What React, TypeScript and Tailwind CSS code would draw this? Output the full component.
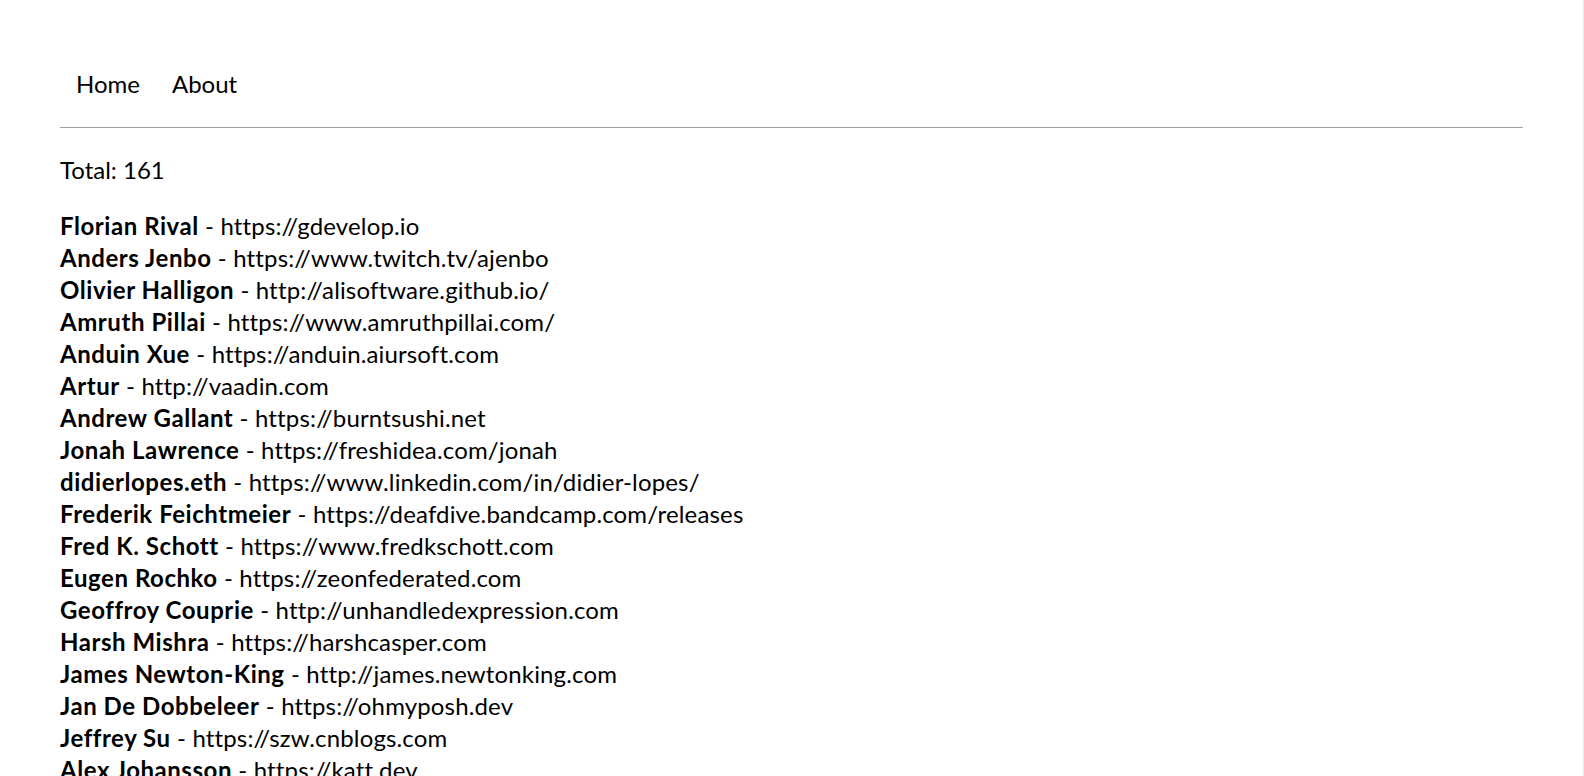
const supporters = [
  { name: 'Florian Rival', url: 'https://gdevelop.io' },
  { name: 'Anders Jenbo', url: 'https://www.twitch.tv/ajenbo' },
  { name: 'Olivier Halligon', url: 'http://alisoftware.github.io/' },
  { name: 'Amruth Pillai', url: 'https://www.amruthpillai.com/' },
  { name: 'Anduin Xue', url: 'https://anduin.aiursoft.com' },
  { name: 'Artur', url: 'http://vaadin.com' },
  { name: 'Andrew Gallant', url: 'https://burntsushi.net' },
  { name: 'Jonah Lawrence', url: 'https://freshidea.com/jonah' },
  { name: 'didierlopes.eth', url: 'https://www.linkedin.com/in/didier-lopes/' },
  { name: 'Frederik Feichtmeier', url: 'https://deafdive.bandcamp.com/releases' },
  { name: 'Fred K. Schott', url: 'https://www.fredkschott.com' },
  { name: 'Eugen Rochko', url: 'https://zeonfederated.com' },
  { name: 'Geoffroy Couprie', url: 'http://unhandledexpression.com' },
  { name: 'Harsh Mishra', url: 'https://harshcasper.com' },
  { name: 'James Newton-King', url: 'http://james.newtonking.com' },
  { name: 'Jan De Dobbeleer', url: 'https://ohmyposh.dev' },
  { name: 'Jeffrey Su', url: 'https://szw.cnblogs.com' },
  { name: 'Alex Johansson', url: 'https://katt.dev' },
  { name: 'Ben Awad', url: 'https://benawad.com' },
  { name: 'Chris Coyier', url: 'https://chriscoyier.net' },
];

export default function App() {
  return (
    <div className="h-screen overflow-hidden border-r border-[#ececec] bg-white px-[60px] pt-[68px] font-['Lato',sans-serif] text-[24px] leading-8 text-black">
      {/* Nav */}
      <nav className="flex">
        <a className="px-4">Home</a>
        <a className="px-4">About</a>
      </nav>

      <hr className="mt-[27px] border-t border-[#a0a0a0]" />

      <p className="mt-[26px]">Total: 161</p>

      {/* Supporter list */}
      <ul className="mt-[24px] tracking-[0.15px]">
        {supporters.map((s) => (
          <li key={s.name}>
            <b className="font-bold tracking-[0.55px]">{s.name}</b> - {s.url}
          </li>
        ))}
      </ul>
    </div>
  );
}
